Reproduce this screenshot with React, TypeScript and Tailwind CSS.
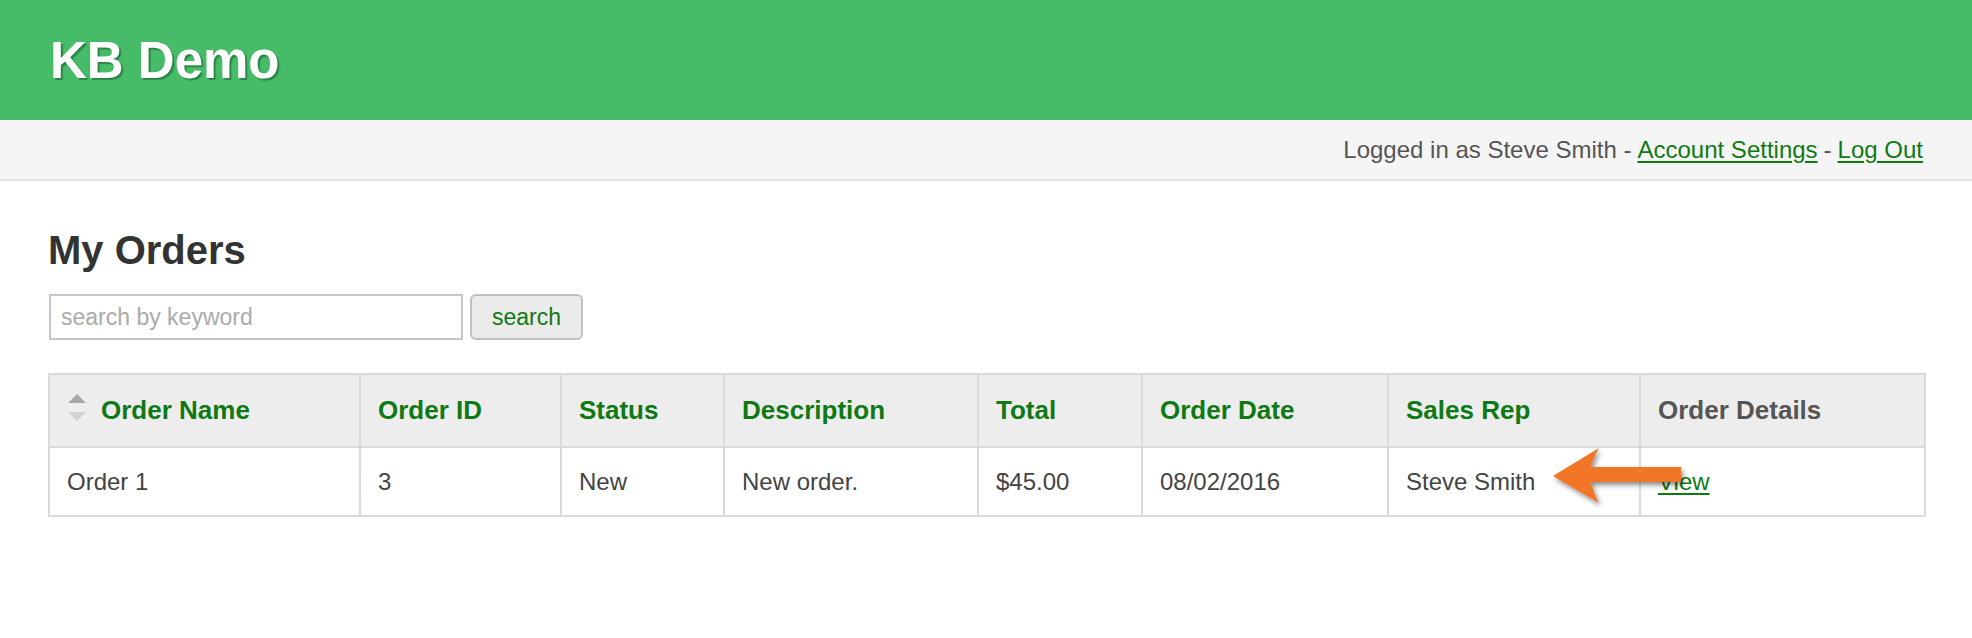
import React from 'react';

const columns = [
  { label: 'Order Name', width: 311, sortable: true },
  { label: 'Order ID', width: 201 },
  { label: 'Status', width: 163 },
  { label: 'Description', width: 254 },
  { label: 'Total', width: 164 },
  { label: 'Order Date', width: 246 },
  { label: 'Sales Rep', width: 252 },
  { label: 'Order Details', width: 285, plain: true },
];

const orders = [
  {
    name: 'Order 1',
    id: '3',
    status: 'New',
    description: 'New order.',
    total: '$45.00',
    date: '08/02/2016',
    rep: 'Steve Smith',
  },
];

function SortArrows() {
  return (
    <svg width="18" height="28" viewBox="0 0 18 28" className="shrink-0">
      <polygon points="9,0 18,9 0,9" fill="#a8a8a8" />
      <polygon points="0,18 18,18 9,27" fill="#d2d2d2" />
    </svg>
  );
}

function CalloutArrow() {
  return (
    <svg
      width="150"
      height="82"
      viewBox="0 0 150 82"
      className="absolute left-[1497px] top-[65px] pointer-events-none"
    >
      <defs>
        <filter id="arrowShadow" x="-20%" y="-30%" width="150%" height="170%">
          <feDropShadow dx="2" dy="3" stdDeviation="2.5" floodColor="#000" floodOpacity="0.45" />
        </filter>
      </defs>
      <path
        d="M8 38 L54 10 Q48 20 46 29 L136 29 L136 44 L46 44 Q48 54 54 65 Z"
        fill="#f07428"
        filter="url(#arrowShadow)"
      />
    </svg>
  );
}

export default function App() {
  return (
    <div className="min-h-[638px] bg-white font-['Liberation_Sans',Arial,sans-serif]">
      {/* Header */}
      <header className="h-[120px] bg-[#46bb68] px-[50px] flex items-center">
        <h1 className="text-[51px] leading-none font-bold text-white [text-shadow:2px_2px_1px_rgba(20,90,45,0.55)]">
          KB Demo
        </h1>
      </header>

      {/* User bar */}
      <div className="h-[61px] bg-[#f5f5f5] border-b-2 border-[#e3e3e3] flex items-center justify-end pr-[49px] text-[24px] text-[#555]">
        <span>Logged in as Steve Smith - </span>
        <a href="#" className="ml-[6px] text-[#0f7a14] underline decoration-2 underline-offset-[3px]">
          Account Settings
        </a>
        <span className="mx-[6px]">-</span>
        <a href="#" className="text-[#0f7a14] underline decoration-2 underline-offset-[3px]">
          Log Out
        </a>
      </div>

      <main className="px-[48px]">
        <h2 className="mt-[49px] text-[40px] leading-none font-bold text-[#333]">My Orders</h2>

        {/* Search */}
        <div className="mt-[24px] flex items-center gap-[7px] pl-[1px]">
          <input
            type="text"
            placeholder="search by keyword"
            className="w-[414px] h-[46px] border-2 border-[#c6c6c6] bg-white px-[10px] text-[23px] text-[#333] placeholder:text-[#ababab] outline-none"
          />
          <button className="w-[113px] h-[46px] rounded-[6px] border-2 border-[#c0c0c0] bg-[#ebebeb] text-[23px] text-[#0f7a14]">
            search
          </button>
        </div>

        {/* Orders table */}
        <div className="relative mt-[33px]">
          <table className="table-fixed border-collapse w-[1876px]">
            <colgroup>
              {columns.map((c) => (
                <col key={c.label} style={{ width: c.width }} />
              ))}
            </colgroup>
            <thead>
              <tr className="bg-[#ededed]">
                {columns.map((c) => (
                  <th
                    key={c.label}
                    className={`h-[73px] border-2 border-[#dadada] px-[17px] text-left align-middle text-[26px] font-bold ${
                      c.plain ? 'text-[#555]' : 'text-[#0f7a14]'
                    }`}
                  >
                    {c.sortable ? (
                      <div className="flex items-center gap-[15px] pl-[1px]">
                        <div className="-mt-[6px]">
                          <SortArrows />
                        </div>
                        <span>{c.label}</span>
                      </div>
                    ) : (
                      c.label
                    )}
                  </th>
                ))}
              </tr>
            </thead>
            <tbody>
              {orders.map((o) => (
                <tr key={o.id} className="text-[24px] text-[#444]">
                  <td className="h-[69px] border-2 border-[#dadada] px-[17px] align-middle">{o.name}</td>
                  <td className="border-2 border-[#dadada] px-[17px] align-middle">{o.id}</td>
                  <td className="border-2 border-[#dadada] px-[17px] align-middle">{o.status}</td>
                  <td className="border-2 border-[#dadada] px-[17px] align-middle">{o.description}</td>
                  <td className="border-2 border-[#dadada] px-[17px] align-middle">{o.total}</td>
                  <td className="border-2 border-[#dadada] px-[17px] align-middle">{o.date}</td>
                  <td className="border-2 border-[#dadada] px-[17px] align-middle">{o.rep}</td>
                  <td className="border-2 border-[#dadada] px-[17px] align-middle">
                    <a href="#" className="text-[#0f7a14] underline decoration-2 underline-offset-[3px]">
                      View
                    </a>
                  </td>
                </tr>
              ))}
            </tbody>
          </table>
          <CalloutArrow />
        </div>
      </main>
    </div>
  );
}
